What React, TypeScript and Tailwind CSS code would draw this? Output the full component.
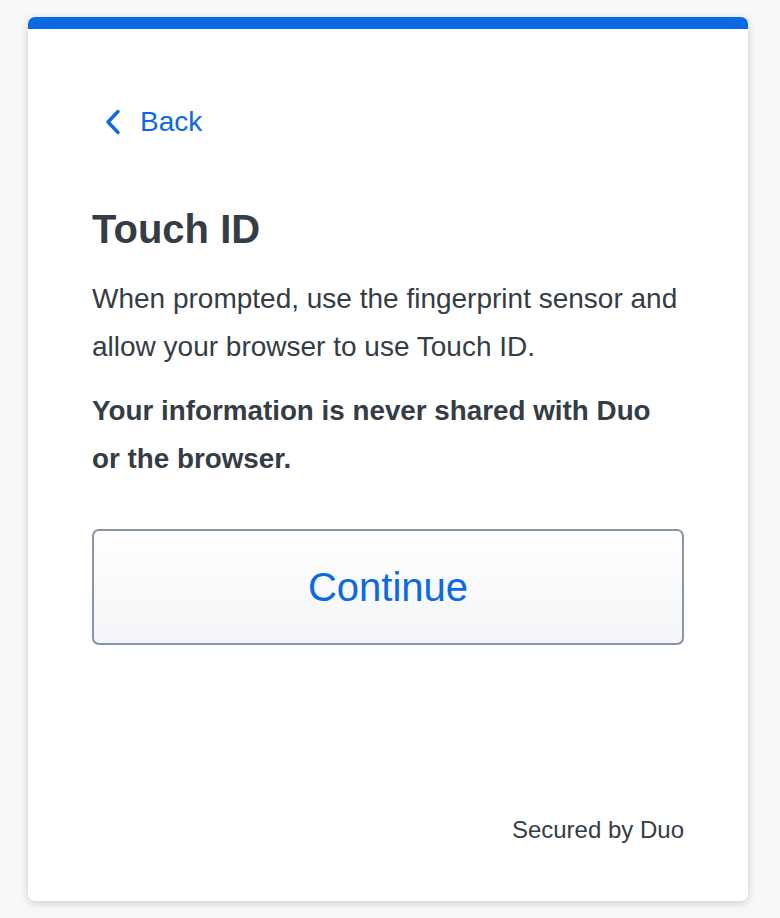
import React from 'react';

const App = () => {
  return (
    <div className="min-h-[918px] w-full bg-[#f8f8f8] pt-[17px] pl-[28px] font-['Liberation_Sans',Arial,sans-serif] text-[#343d45]">
      <div className="flex h-[884px] w-[720px] flex-col overflow-hidden rounded-[7px] bg-white shadow-[0_2px_8px_rgba(0,0,0,0.18)]">
        {/* top accent */}
        <div className="h-[12px] bg-[#0a69e3]" />

        <div className="flex flex-1 flex-col px-[64px]">
          {/* back link */}
          <button className="mt-[77px] flex items-center gap-[18px] self-start pl-[12px] text-[#0a69e3]">
            <svg width="18" height="26" viewBox="0 0 18 26" fill="none" stroke="currentColor" strokeWidth="3.4" strokeLinecap="round" strokeLinejoin="round">
              <path d="M14 2.5 L4 13 L14 23.5" />
            </svg>
            <span className="text-[28px] leading-[32px]">Back</span>
          </button>

          <h1 className="mt-[69px] text-[40px] font-bold leading-[44px]">Touch ID</h1>

          <p className="mt-[24px] text-[28px] leading-[48px]">
            When prompted, use the fingerprint sensor and allow your browser to use Touch ID.
          </p>
          <p className="mt-[16px] pr-[20px] text-[27.8px] font-bold leading-[48px]">
            Your information is never shared with Duo or the browser.
          </p>

          <button className="mt-[46px] h-[116px] w-full rounded-[7px] border-2 border-[#8a96a3] bg-gradient-to-b from-white to-[#f4f5f8] text-[40px] text-[#0a69e3]">
            Continue
          </button>

          <div className="mt-auto mb-[57px] text-right text-[24px] leading-[28px]">Secured by Duo</div>
        </div>
      </div>
    </div>
  );
};

export default App;
